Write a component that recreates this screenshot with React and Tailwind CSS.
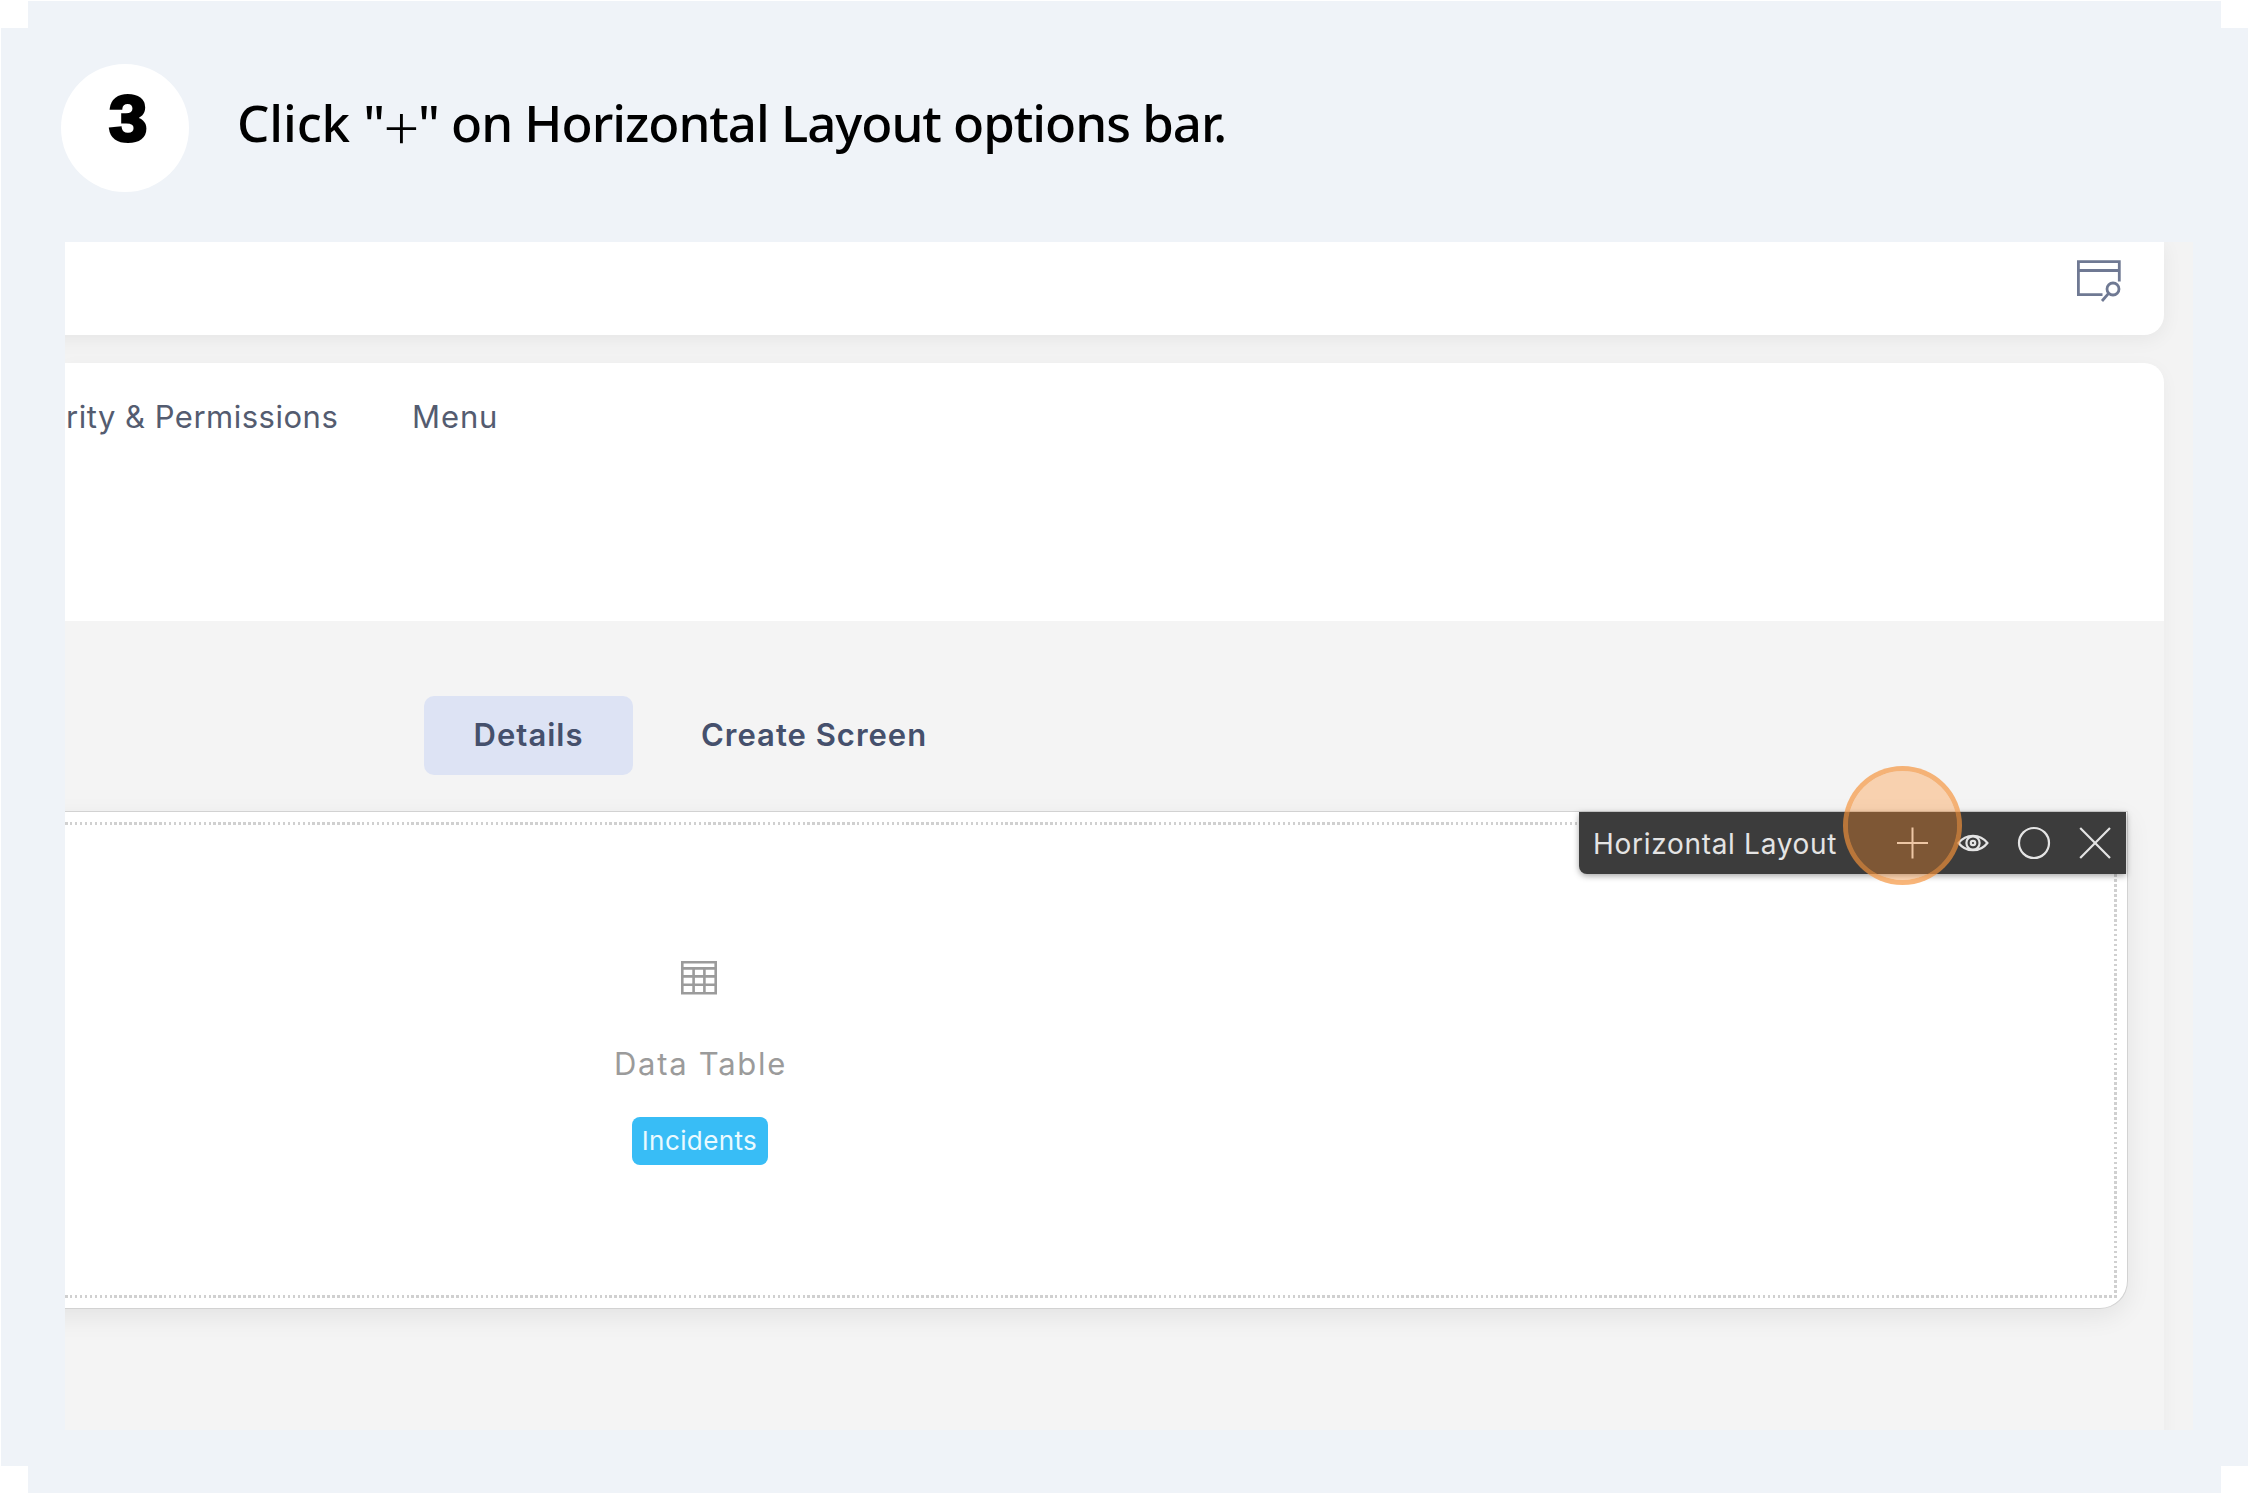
import React from 'react';

function StepHeader() {
  return (
    <header className="flex h-[241px] shrink-0 items-start pl-[60px] pt-[63px] text-black">
      <div className="flex size-[128px] shrink-0 justify-center rounded-full bg-white pt-[22px] pl-[6px] font-['Liberation_Sans',sans-serif] text-[65px] leading-[66px] font-bold [-webkit-text-stroke:3px_#000]">
        <span className="scale-x-[1.06]">3</span>
      </div>
      <h1 className="ml-[48px] flex h-[116px] items-center font-['Noto_Sans',sans-serif] text-[51px] leading-[60px] font-medium tracking-[-1.02px] whitespace-pre">
        <span className="tracking-[-0.1px]">{'Click "'}</span>
        <span className="flex w-[33px] justify-center pt-[2px] font-['Inter',sans-serif] text-[68px] font-extralight tracking-normal">+</span>
        <span>{'" on Horizontal Layout options bar.'}</span>
      </h1>
    </header>
  );
}

function PreviewIcon() {
  return (
    <svg className="h-[44px] w-[48px]" viewBox="0 0 48 44" fill="none" stroke="#6f7993" strokeWidth="2.8">
      <path d="M43.3 23.5V3.7H2.4V36.7H26.5M2.4 12.5H43.3" />
      <circle cx="37" cy="31" r="6" />
      <path d="M32.6 35.3L26 43" />
    </svg>
  );
}

function TableIcon() {
  return (
    <svg className="h-[34px] w-[36px]" viewBox="0 0 36 34" fill="none" stroke="#9b9b9b" strokeWidth="2.6">
      <path d="M1.3 1.3H34.7V32.2H1.3ZM1.3 7.4H34.7M1.3 15.4H34.7M1.3 23.7H34.7M12.6 7.4V32.2M23.4 7.4V32.2" />
    </svg>
  );
}

function OptionsBar() {
  return (
    <div className="absolute right-[1px] top-0 flex h-[62px] w-[547px] items-center rounded-bl-[8px] bg-[#3c3c3c] pl-[14px] text-[#e4e4e4] shadow-[0_2px_6px_rgba(0,0,0,0.35)]">
      <span className="w-[302px] pt-[2px] text-[28px] leading-[40px] tracking-[0.7px] whitespace-nowrap">Horizontal Layout</span>
      <svg className="size-[34px]" viewBox="0 0 34 34" fill="none" stroke="currentColor" strokeWidth="2">
        <path d="M17.5 1.5V32.5M2 17H33" />
      </svg>
      <svg className="ml-[28px] h-[18px] w-[32px]" viewBox="0 0 32 18" fill="none" stroke="currentColor" strokeWidth="2.2">
        <path d="M1.6 9C5.2 4.2 10.2 1.8 16 1.8S26.8 4.2 30.4 9C26.8 13.8 21.8 16.2 16 16.2S5.2 13.8 1.6 9Z" />
        <circle cx="16" cy="9" r="6.6" />
        <circle cx="16" cy="9" r="2.2" />
      </svg>
      <svg className="ml-[28px] size-[34px]" viewBox="0 0 34 34" fill="none" stroke="currentColor" strokeWidth="2.2">
        <circle cx="17" cy="17" r="15" />
      </svg>
      <svg className="ml-[27px] size-[34px]" viewBox="0 0 34 34" fill="none" stroke="currentColor" strokeWidth="2.2">
        <path d="M2.2 2L32 32M32 2L2.2 32" />
      </svg>
      <div className="absolute left-[264px] top-[-46px] size-[119px] rounded-full border-[5px] border-[rgba(244,146,58,0.68)] bg-[rgba(255,140,42,0.34)] bg-clip-padding" />
    </div>
  );
}

function LayoutPanel() {
  return (
    <section className="relative mr-[36px] -ml-[40px] h-[498px] rounded-br-[28px] border-y border-r border-[#d2d2d2] bg-white pt-[10px] pr-[10px] pb-[10px] pl-[40px] shadow-[0_8px_26px_rgba(0,0,0,0.07)]">
      <div className="flex h-full flex-col">
        <div className="h-[3px] bg-[repeating-linear-gradient(90deg,#d0d0d0_0_2.5px,transparent_2.5px_4.95px)]" />
        <div className="flex grow">
          <div className="flex w-[1269px] flex-col items-center pt-[136px]">
            <div className="-ml-[2px]">
              <TableIcon />
            </div>
            <p className="mt-[49px] -mr-[2px] text-[31px] leading-[40px] tracking-[1.7px] text-[#9b9b9b]">Data Table</p>
            <span className="mt-[33px] flex h-[48px] w-[136px] items-center justify-center rounded-[8px] bg-[#38bdf6] text-[26px] leading-[30px] tracking-[0.4px] text-[#eafaff]">
              Incidents
            </span>
          </div>
          <div className="ml-auto w-[3px] bg-[repeating-linear-gradient(180deg,#d0d0d0_0_2.5px,transparent_2.5px_4.95px)]" />
        </div>
        <div className="h-[3px] bg-[repeating-linear-gradient(90deg,#d0d0d0_0_2.5px,transparent_2.5px_4.95px)]" />
      </div>
      <OptionsBar />
    </section>
  );
}

export default function App() {
  return (
    <div className="h-[1498px] w-[2255px] overflow-hidden bg-white pl-px pt-px">
      <div className="flex h-[1492px] w-[2247px] flex-col bg-[#eff3f8] [clip-path:polygon(27px_0,2220px_0,2220px_27px,100%_27px,100%_1465px,2220px_1465px,2220px_100%,27px_100%,27px_1465px,0_1465px,0_27px,27px_27px)]">
        <StepHeader />
        <main className="ml-[64px] h-[1188px] w-[2128px] overflow-hidden bg-[#f3f3f3] font-['Inter',sans-serif]">
          <div className="-ml-[40px] flex h-[93px] w-[2139px] justify-end rounded-br-[20px] bg-white pt-[16px] pr-[40px] shadow-[0_4px_20px_rgba(0,0,0,0.06)]">
            <PreviewIcon />
          </div>
          <div className="mt-[28px] h-[1100px] w-[2099px] rounded-tr-[20px] bg-[#f4f4f4] shadow-[0_4px_18px_rgba(0,0,0,0.04)]">
            <nav className="flex h-[258px] rounded-tr-[20px] bg-white pt-[34px] pl-px text-[31px] leading-[40px] text-[#545c70]">
              <span className="w-[346px] tracking-[0.5px] whitespace-nowrap">rity &amp; Permissions</span>
              <span className="tracking-[0.9px]">Menu</span>
            </nav>
            <div className="flex h-[190px] pl-[359px] pt-[75px] text-[31px] leading-[40px] font-semibold tracking-[1px] text-[#45506c]">
              <span className="flex h-[79px] w-[209px] items-center justify-center rounded-[10px] bg-[#dde3f4] pb-[2px]">Details</span>
              <span className="flex h-[79px] items-center pl-[68px] pb-[2px]">Create Screen</span>
            </div>
            <LayoutPanel />
          </div>
        </main>
      </div>
    </div>
  );
}
